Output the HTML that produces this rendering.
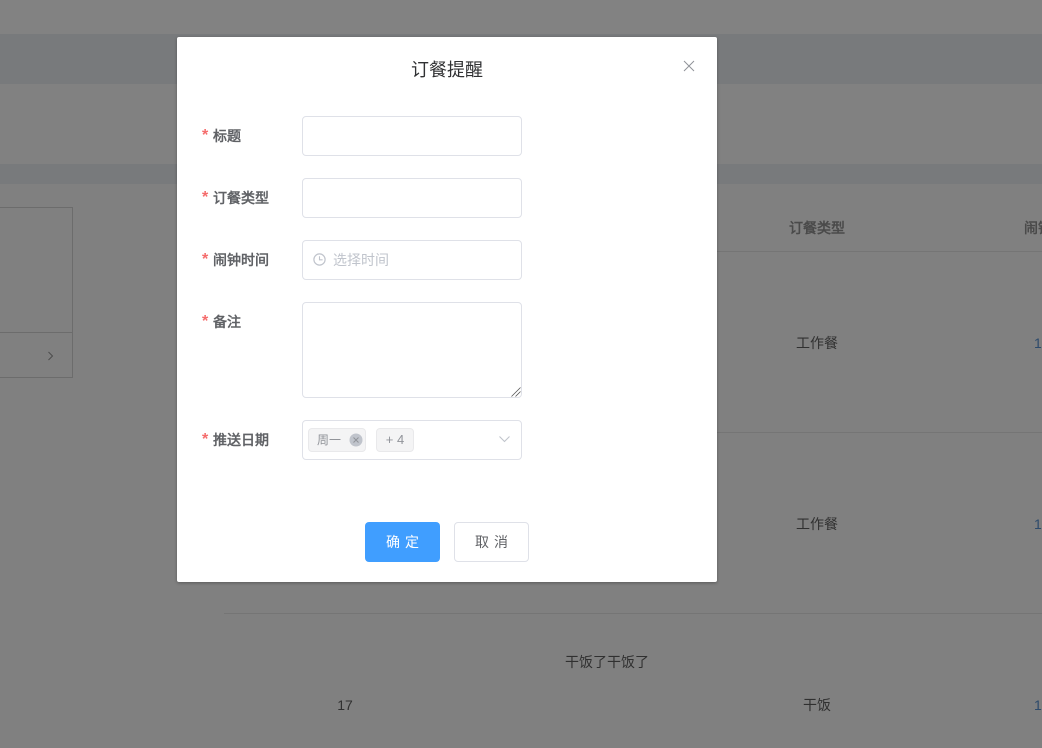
<!DOCTYPE html>
<html lang="zh">
<head>
<meta charset="utf-8">
<style>
html,body{margin:0;padding:0;width:1042px;height:748px;overflow:hidden;background:#808080}
body{position:relative;font-family:"Liberation Sans","WenQuanYi Zen Hei",sans-serif;font-size:14px;color:#333}
.a{position:absolute}
.t{position:absolute;white-space:nowrap;line-height:20px}
.c{transform:translateX(-50%)}
.input{position:absolute;left:302px;width:218px;height:38px;border:1px solid #dfe1e8;border-radius:4px;background:#fff}
.lab{position:absolute;left:213px;height:20px;line-height:20px;font-size:14px;font-weight:bold;color:#606266;white-space:nowrap}
.lab i{position:absolute;left:-11px;top:0;font-style:normal;font-weight:bold;font-size:16px;color:#f56c6c}
.tag{position:absolute;top:428px;height:22px;line-height:22px;background:#f4f4f5;border:1px solid #e9e9eb;border-radius:4px;font-size:12px;color:#909399;box-sizing:content-box}
.btn{position:absolute;top:522px;height:40px;line-height:40px;text-align:center;font-size:14px;border-radius:4px;box-sizing:border-box;letter-spacing:5px;text-indent:5px}
</style>
</head>
<body>
<!-- dimmed background -->
<div class="a" style="left:0;top:0;width:1042px;height:34px;background:#828282"></div>
<div class="a" style="left:0;top:34px;width:1042px;height:50px;background:#787a7c"></div>
<div class="a" style="left:0;top:84px;width:1042px;height:80px;background:#818181"></div>
<div class="a" style="left:0;top:164px;width:1042px;height:20px;background:#787a7c"></div>
<div class="a" style="left:-1px;top:207px;width:73px;height:124px;border:1px solid #6c6c6c;border-left:0"></div>
<div class="a" style="left:-1px;top:332px;width:73px;height:45px;border:1px solid #6c6c6c;border-top:0;border-left:0"></div>
<svg class="a" style="left:46px;top:351px" width="10" height="10" viewBox="0 0 10 10"><path d="M2.5 1 L6.5 5 L2.5 9" fill="none" stroke="#4c4c4c" stroke-width="1"/></svg>

<div class="a" style="left:224px;top:251px;width:818px;height:1px;background:#757575"></div>
<div class="a" style="left:224px;top:432px;width:818px;height:1px;background:#757575"></div>
<div class="a" style="left:224px;top:613px;width:818px;height:1px;background:#757575"></div>

<div class="t c" style="left:817px;top:218px;font-weight:bold;color:#4a4a4a">订餐类型</div>
<div class="t" style="left:1024px;top:218px;font-weight:bold;color:#4a4a4a">闹钟时间</div>
<div class="t c" style="left:817px;top:333px;color:#303030">工作餐</div>
<div class="t" style="left:1034px;top:333px;color:#2d4a6b">1</div>
<div class="t c" style="left:817px;top:514px;color:#303030">工作餐</div>
<div class="t" style="left:1034px;top:514px;color:#2d4a6b">1</div>
<div class="t c" style="left:607px;top:652px;color:#303030">干饭了干饭了</div>
<div class="t c" style="left:345px;top:695px;color:#303030">17</div>
<div class="t c" style="left:817px;top:695px;color:#303030">干饭</div>
<div class="t" style="left:1034px;top:695px;color:#2d4a6b">1</div>

<!-- dialog -->
<div class="a" style="left:177px;top:37px;width:540px;height:545px;background:#fff;border-radius:2px;box-shadow:0 1px 3px rgba(0,0,0,.3)"></div>
<div class="t c" style="left:447px;top:58px;font-size:18px;line-height:24px;color:#303133">订餐提醒</div>
<svg class="a" style="left:683px;top:60px" width="12" height="12" viewBox="0 0 12 12"><path d="M1 1 L11 11 M11 1 L1 11" fill="none" stroke="#909399" stroke-width="1"/></svg>

<div class="lab" style="top:126px"><i>*</i>标题</div>
<div class="input" style="top:116px"></div>
<div class="lab" style="top:188px"><i>*</i>订餐类型</div>
<div class="input" style="top:178px"></div>
<div class="lab" style="top:250px"><i>*</i>闹钟时间</div>
<div class="input" style="top:240px"></div>
<svg class="a" style="left:312px;top:252px" width="15" height="15" viewBox="0 0 15 15"><circle cx="7.5" cy="7.5" r="5.6" fill="none" stroke="#c0c4cc" stroke-width="1.2"/><path d="M7.5 4.2 V7.8 H10.6" fill="none" stroke="#c0c4cc" stroke-width="1.1"/></svg>
<div class="t" style="left:333px;top:250px;color:#c0c4cc">选择时间</div>

<div class="lab" style="top:312px"><i>*</i>备注</div>
<div class="input" style="top:302px;height:94px"></div>
<svg class="a" style="left:510px;top:386px" width="12" height="12" viewBox="0 0 12 12"><path d="M1.5 10.5 L10.5 1.5 M5.5 10.5 L10.5 5.5" fill="none" stroke="#555" stroke-width="0.8"/></svg>

<div class="lab" style="top:430px"><i>*</i>推送日期</div>
<div class="input" style="top:420px"></div>
<div class="tag" style="left:308px;width:56px"><span class="a" style="left:8px;top:0">周一</span></div>
<svg class="a" style="left:349px;top:433px" width="14" height="14" viewBox="0 0 14 14"><circle cx="7" cy="7" r="6.5" fill="#c0c4cc"/><path d="M4.5 4.5 L9.5 9.5 M9.5 4.5 L4.5 9.5" stroke="#909399" stroke-width="1" fill="none"/></svg>
<div class="tag" style="left:376px;width:36px;text-align:center;font-size:13px">+ 4</div>
<svg class="a" style="left:497px;top:434px" width="15" height="12" viewBox="0 0 15 12"><path d="M2.5 2.5 L7.5 7.5 L12.5 2.5" fill="none" stroke="#c0c4cc" stroke-width="1.1"/></svg>

<div class="btn" style="left:365px;width:75px;background:#409eff;color:#fff">确定</div>
<div class="btn" style="left:454px;width:75px;background:#fff;border:1px solid #dfe1e8;color:#606266;line-height:38px">取消</div>
</body>
</html>
